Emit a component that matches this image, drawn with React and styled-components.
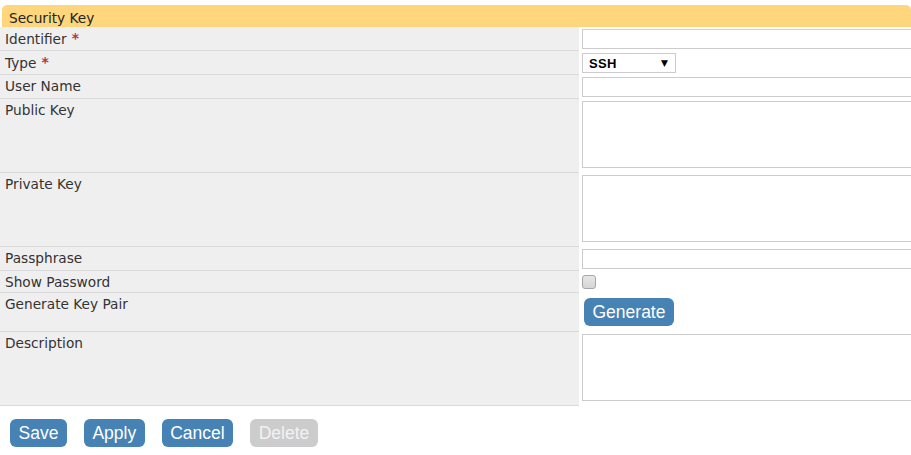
import React from "react";
import styled, { createGlobalStyle } from "styled-components";

const Global = createGlobalStyle`
  html, body { margin: 0; padding: 0; overflow: hidden; background: #fff; }
  body { font-family: "DejaVu Sans", Verdana, sans-serif; font-size: 13.7px; color: #333; }
`;

const Page = styled.div`
  width: 911px;
  padding-top: 5px;
`;

const Header = styled.div`
  margin-left: 2px;
  height: 22px;
  box-sizing: border-box;
  padding: 4px 0 0 7px;
  line-height: 18px;
  background: #ffd67b;
  border-radius: 5px 5px 0 0;
  color: #222;
  font-size: 13.7px;
`;

const Form = styled.div`
  display: grid;
  grid-template-columns: 579px 1fr;
`;

const Label = styled.div`
  background: #efefef;
  border-bottom: 1px solid #dadada;
  padding: 3px 5px 0;
  line-height: 17px;
  color: #333;
`;

const Req = styled.span`
  color: #b03a3a;
  font-weight: bold;
  margin-left: 5px;
  font-size: 14px;
  vertical-align: 1px;
`;

const Value = styled.div`
  background: #fff;
  padding: 2px 0 2px 3px;
  display: flex;
  align-items: flex-start;
  min-width: 0;
`;

const TextInput = styled.input`
  box-sizing: border-box;
  width: 380px;
  flex: none;
  height: 20px;
  margin: 0;
  border: 1px solid #cccccc;
  background: #fff;
  font: 13px "DejaVu Sans", sans-serif;
  outline: none;
`;

const TextArea = styled.textarea`
  box-sizing: border-box;
  width: 380px;
  flex: none;
  height: 67px;
  margin: 0 0 3px;
  border: 1px solid #cccccc;
  background: #fff;
  resize: none;
  font: 13px "DejaVu Sans", sans-serif;
  outline: none;
`;

const SelectWrap = styled.div`
  position: relative;
  width: 94px;
  height: 20px;
`;

const Select = styled.select`
  appearance: none;
  -webkit-appearance: none;
  box-sizing: border-box;
  width: 94px;
  height: 20px;
  margin: 0;
  border: 1px solid #cccccc;
  border-radius: 0;
  background: #fff;
  padding: 0 0 0 6px;
  font: bold 13px "Liberation Sans", Arial, sans-serif;
  letter-spacing: 0.3px;
  color: #000;
  outline: none;
`;

const Arrow = styled.span`
  position: absolute;
  right: 8px;
  top: 5px;
  font-size: 9px;
  line-height: 10px;
  color: #000;
  pointer-events: none;
  font-family: "DejaVu Sans", sans-serif;
`;

const Check = styled.input`
  appearance: none;
  -webkit-appearance: none;
  box-sizing: border-box;
  width: 14px;
  height: 14px;
  margin: 2px 0;
  border: 1px solid #a6a6a6;
  border-radius: 3px;
  background: linear-gradient(#e6e6e6, #d6d6d6);
`;

const Button = styled.button`
  height: 28px;
  padding: 0 8.5px;
  margin: 0;
  border: none;
  border-radius: 6px;
  background: ${(p) => (p.disabled ? "#cccccc" : "#4682b4")};
  color: ${(p) => (p.disabled ? "#f2f2f2" : "#fff")};
  font: 17.5px/28px "Liberation Sans", Arial, sans-serif;
  cursor: pointer;
`;

const GenButton = styled(Button)`
  margin: 3px 0 4px 2px;
`;

const Actions = styled.div`
  display: flex;
  gap: 17px;
  padding: 13px 0 0 10px;
`;

export default function App() {
  return (
    <>
      <Global />
      <Page>
        <Header>Security Key</Header>
        <Form>
          <Label>
            Identifier<Req>*</Req>
          </Label>
          <Value>
            <TextInput type="text" />
          </Value>

          <Label>
            Type<Req>*</Req>
          </Label>
          <Value>
            <SelectWrap>
              <Select defaultValue="SSH">
                <option value="SSH">SSH</option>
              </Select>
              <Arrow>▼</Arrow>
            </SelectWrap>
          </Value>

          <Label>User Name</Label>
          <Value>
            <TextInput type="text" />
          </Value>

          <Label>Public Key</Label>
          <Value>
            <TextArea />
          </Value>

          <Label>Private Key</Label>
          <Value>
            <TextArea />
          </Value>

          <Label>Passphrase</Label>
          <Value>
            <TextInput type="password" />
          </Value>

          <Label>Show Password</Label>
          <Value>
            <Check type="checkbox" />
          </Value>

          <Label>Generate Key Pair</Label>
          <Value>
            <GenButton>Generate</GenButton>
          </Value>

          <Label>Description</Label>
          <Value>
            <TextArea />
          </Value>
        </Form>
        <Actions>
          <Button>Save</Button>
          <Button>Apply</Button>
          <Button>Cancel</Button>
          <Button disabled>Delete</Button>
        </Actions>
      </Page>
    </>
  );
}
